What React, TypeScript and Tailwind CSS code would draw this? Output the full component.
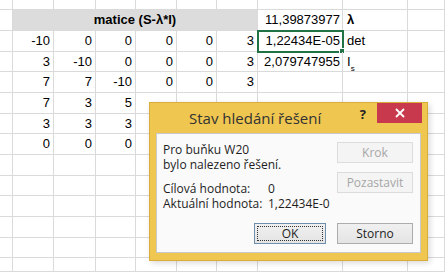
import React from "react";

const colWidths = "13px 41px 42px 40px 41px 40px 41px 85px 65px 1fr";
const rowHeights = "10px 21px 21px 20px 21px 21px 20px 21px 21px 20px 21px 21px 20px 1fr";

type Row = { nums: (number | null)[]; g?: string; h?: React.ReactNode };

const rows: Row[] = [
  { nums: [-10, 0, 0, 0, 0, 3], g: "1,22434E-05", h: "det" },
  { nums: [3, -10, 0, 0, 0, 3], g: "2,079747955", h: (<span>I<sub className="text-[8px] align-[-3px]">s</sub></span>) },
  { nums: [7, 7, -10, 0, 0, 3] },
  { nums: [7, 3, 5, null, null, null] },
  { nums: [3, 3, 3, null, null, null] },
  { nums: [0, 0, 0, null, null, null] },
  { nums: [] },
  { nums: [] },
  { nums: [] },
  { nums: [] },
  { nums: [] },
  { nums: [] },
];

const cell = "border-r border-b border-[#dadada] flex items-center overflow-visible whitespace-nowrap";

function Sheet() {
  return (
    <div
      className="grid h-[272px] w-[445px] bg-white text-[13px] text-black"
      style={{ gridTemplateColumns: colWidths, gridTemplateRows: rowHeights, fontFamily: '"Liberation Sans", Arial, sans-serif' }}
    >
      {/* top partial row */}
      {Array.from({ length: 10 }).map((_, i) => (
        <div key={`t${i}`} className={cell} />
      ))}

      {/* header row */}
      <div className={cell} />
      <div className="col-span-6 flex items-center justify-center border-b border-r border-[#dadada] bg-[#dcdcdc] font-bold">
        matice (S-λ*I)
      </div>
      <div className={`${cell} justify-end pr-[2px]`}>11,39873977</div>
      <div className={`${cell} pl-[4px] font-bold`}>λ</div>
      <div className={cell} />

      {rows.map((r, ri) => (
        <React.Fragment key={ri}>
          <div className={cell} />
          {Array.from({ length: 6 }).map((_, ci) => (
            <div key={ci} className={`${cell} justify-end pr-[3px]`}>
              {r.nums[ci] ?? ""}
            </div>
          ))}
          <div
            className={`${cell} relative justify-end pr-[2px] ${
              ri === 0 ? "outline-2 -outline-offset-1 outline-[#217346]" : ""
            }`}
          >
            {r.g ?? ""}
            {ri === 0 && <span className="absolute -bottom-[3px] -right-[3px] h-[6px] w-[6px] border border-white bg-[#217346]" />}
          </div>
          <div className={`${cell} pl-[4px]`}>{r.h ?? ""}</div>
          <div className={cell} />
        </React.Fragment>
      ))}

      {/* bottom partial row */}
      {Array.from({ length: 10 }).map((_, i) => (
        <div key={`b${i}`} className="border-r border-[#dadada]" />
      ))}
    </div>
  );
}

function DlgButton({ label, width, disabled, focused }: { label: string; width: string; disabled?: boolean; focused?: boolean }) {
  return (
    <button
      type="button"
      disabled={disabled}
      className={`relative flex h-[21px] items-center justify-center border text-[12px] ${width} ${
        disabled
          ? "border-[#dcdcdc] bg-[#f4f4f4] text-[#a6a6a6]"
          : focused
          ? "border-[#6f8fae] bg-gradient-to-b from-[#f0f0f0] to-[#e4e4e4] text-[#1e1e1e]"
          : "border-[#acacac] bg-gradient-to-b from-[#f0f0f0] to-[#e4e4e4] text-[#1e1e1e]"
      }`}
    >
      {focused && <span className="absolute inset-[2px] border border-dotted border-[#333]" />}
      <span className="relative">{label}</span>
    </button>
  );
}

function SolverDialog() {
  return (
    <div
      className="absolute left-[149px] top-[102px] flex h-[159px] w-[279px] flex-col border border-[#d9ad3c] bg-[#efc650] px-[6px] pb-[7px] shadow-[2px_2px_6px_rgba(0,0,0,0.15)]"
      style={{ fontFamily: '"Open Sans", "Noto Sans", sans-serif' }}
    >
      <div className="flex h-[30px] items-start">
        <div className="flex-1 pl-[33px] pt-[5px] text-[15px] leading-[20px] text-[#333]">Stav hledání řešení</div>
        <div className="pt-[3px] pr-[11px] text-[13px] font-bold leading-[16px] text-[#222]">?</div>
        <div className="-mr-[1px] flex h-[20px] w-[45px] items-center justify-center bg-[#c9394e] text-white">
          <svg width="10" height="10" viewBox="0 0 10 10">
            <path d="M1 1 L9 9 M9 1 L1 9" stroke="white" strokeWidth="1.8" />
          </svg>
        </div>
      </div>
      <div className="flex flex-1 flex-col border border-[#c8c8c8] bg-[#fafafa] pb-[8px] pl-[6px] pr-[7px] pt-[8px] text-[12px] text-[#1e1e1e]">
        <div className="flex justify-between">
          <div className="leading-[15px]">
            <div>Pro buňku W20</div>
            <div>bylo nalezeno řešení.</div>
            <div className="mt-[9px] flex">
              <span className="w-[105px]">Cílová hodnota:</span>
              <span>0</span>
            </div>
            <div className="flex">
              <span className="w-[105px]">Aktuální hodnota:</span>
              <span>1,22434E-0</span>
            </div>
          </div>
          <div className="flex flex-col gap-[9px]">
            <DlgButton label="Krok" width="w-[76px]" disabled />
            <DlgButton label="Pozastavit" width="w-[76px]" disabled />
          </div>
        </div>
        <div className="mt-auto flex justify-end gap-[11px]">
          <DlgButton label="OK" width="w-[72px]" focused />
          <DlgButton label="Storno" width="w-[76px]" />
        </div>
      </div>
    </div>
  );
}

export default function App() {
  return (
    <div className="relative h-[272px] w-[445px] overflow-hidden bg-white">
      <Sheet />
      <SolverDialog />
    </div>
  );
}
